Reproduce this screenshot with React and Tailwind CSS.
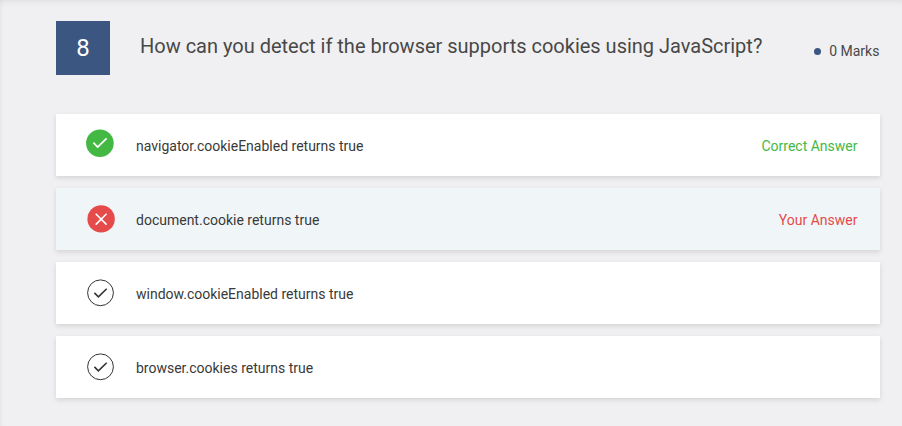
const answers = [
  { text: 'navigator.cookieEnabled returns true', state: 'correct', label: 'Correct Answer' },
  { text: 'document.cookie returns true', state: 'wrong', label: 'Your Answer' },
  { text: 'window.cookieEnabled returns true', state: 'idle' },
  { text: 'browser.cookies returns true', state: 'idle' },
];

function Icon({ state }) {
  if (state === 'correct')
    return (
      <svg className="mb-1 ml-[30px] h-7 w-7 shrink-0" viewBox="0 0 28 28" fill="none">
        <circle cx="13.9" cy="14.2" r="13.8" fill="#43b944" />
        <path d="M7.4 13.7l4.3 4.3L20.6 9.4" stroke="white" strokeWidth="1.7" />
      </svg>
    );
  if (state === 'wrong')
    return (
      <svg className="ml-[31px] h-7 w-7 shrink-0" viewBox="0 0 28 28" fill="none">
        <circle cx="14.1" cy="13.9" r="13.7" fill="#e54b4b" />
        <path d="M9.2 9.2l9.9 9.9M19.1 9.2l-9.9 9.9" stroke="white" strokeWidth="1.6" strokeLinecap="round" />
      </svg>
    );
  return (
    <svg className="ml-[30px] h-7 w-7 shrink-0" viewBox="0 0 28 28" fill="none">
      <circle cx="14.5" cy="13.8" r="12.9" fill="white" stroke="#333" />
      <path d="M8.4 13.9l4 3.9L20.7 9.7" stroke="#333" strokeWidth="1.6" />
    </svg>
  );
}

export default function App() {
  return (
    <main className="h-[426px] w-[902px] bg-[#f0f0f2] pl-14 pr-[22px] pt-[21px] font-['Roboto',sans-serif] text-[#393939] antialiased shadow-[inset_0_6px_6px_-4px_rgba(0,0,0,0.07),inset_4px_0_4px_-3px_rgba(0,0,0,0.05)]">
      <header className="flex h-[54px] items-start">
        <div className="flex h-[54px] w-[54px] items-center justify-center bg-[#3b5680] text-2xl text-white">8</div>
        <h1 className="ml-[30px] flex-1 whitespace-nowrap pt-[10px] text-[20px] leading-[30px] tracking-[-0.008px] text-[#484848]">How can you detect if the browser supports cookies using JavaScript?</h1>
        <div className="mr-[0.6px] flex items-center gap-2 pt-5 text-sm text-[#484848]"><span className="h-[7px] w-[7px] rounded-full bg-[#3b5684]" />0 Marks</div>
      </header>
      <ul className="mt-[39px] flex flex-col gap-3">
        {answers.map((a) => (
          <li key={a.text} className={`flex h-[62px] items-center shadow-[0_2px_5px_rgba(0,0,0,0.12)] ${a.state === 'wrong' ? 'bg-[#f0f6f8]' : 'bg-white'}`}>
            <div className="flex w-20 shrink-0"><Icon state={a.state} /></div>
            <span className="flex-1 pt-0.5 text-sm">{a.text}</span>
            {a.label && <span className={`mr-[22.5px] pt-0.5 text-sm ${a.state === 'wrong' ? 'text-[#e54b4b]' : 'text-[#43b944]'}`}>{a.label}</span>}
          </li>
        ))}
      </ul>
    </main>
  );
}
